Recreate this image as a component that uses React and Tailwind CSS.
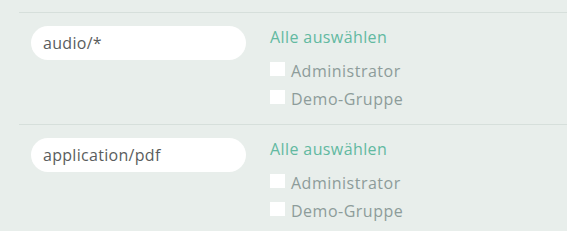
import React from "react";

const ROWS = [
  { mime: "audio/*", groups: ["Administrator", "Demo-Gruppe"] },
  { mime: "application/pdf", groups: ["Administrator", "Demo-Gruppe"] },
];

const MimeRow = ({ mime, groups }) => (
  <div className="border-t border-[#d6dfdb] pt-[13px] pb-[11px] flex">
    <div className="ml-[12px] w-[215px] h-[34px] rounded-full bg-white flex items-center px-[12px] text-[16px] tracking-[0.3px] text-[#5a5d5d]">
      {mime}
    </div>
    <div className="ml-[24px] flex flex-col">
      <span className="h-[22px] leading-[22px] text-[16px] tracking-[0.4px] text-[#62b9a1]">Alle auswählen</span>
      <div className="mt-[9px] flex flex-col">
        {groups.map((g) => (
          <label key={g} className="h-[28px] flex items-center gap-[6px] text-[16px] tracking-[0.5px] text-[#8d9c9a]">
            <span className="w-[15px] h-[14px] bg-white -mt-[4px]" />
            {g}
          </label>
        ))}
      </div>
    </div>
  </div>
);

export default function App() {
  return (
    <div className="w-[567px] h-[231px] bg-[#e8eeeb] overflow-hidden pt-[12px] pl-[19px]" style={{ fontFamily: '"Open Sans", sans-serif' }}>
      {ROWS.map((r) => (
        <MimeRow key={r.mime} {...r} />
      ))}
    </div>
  );
}
